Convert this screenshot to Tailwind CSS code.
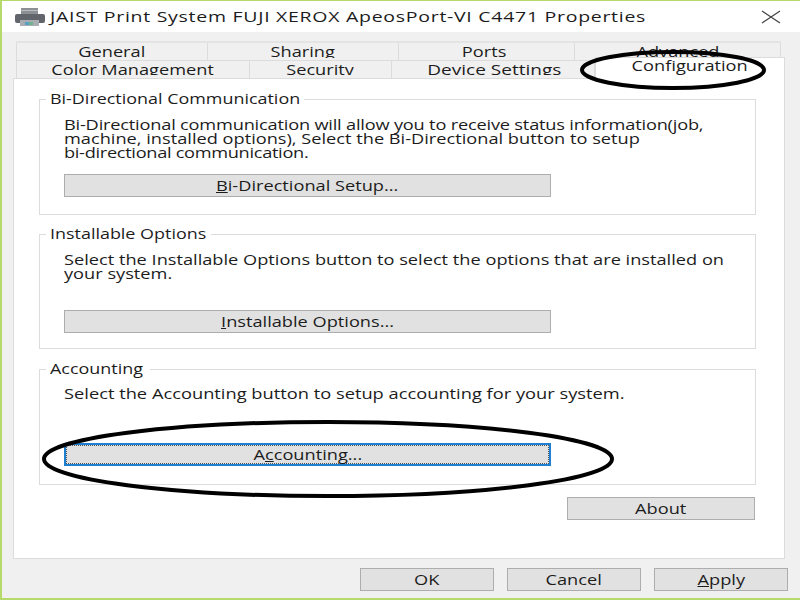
<!DOCTYPE html>
<html><head><meta charset="utf-8"><script src="https://cdn.jsdelivr.net/npm/@tailwindcss/browser@4"></script></head>
<body class="m-0 p-0">
<div class="relative w-[800px] h-[600px] overflow-hidden bg-[#f0f0f0] border-t border-l-2 border-b-2 border-[#b5d96a] font-['Open_Sans',sans-serif] text-[14px] text-[#1c1c1c] box-border flex flex-col">
  <div class="h-[31px] shrink-0 bg-white flex items-center pl-[12px] pr-[19px]">
    <svg width="32" height="20" viewBox="0 0 32 20" class="shrink-0"><rect x="7" y="1" width="17" height="7" fill="#8c8f94"/><rect x="7" y="3" width="17" height="1" fill="#b9bcc0"/><rect x="1" y="7" width="30" height="9" rx="2" fill="#62666c"/><rect x="6" y="13" width="19" height="6" fill="#a9adb2"/><rect x="11" y="15" width="4" height="3" fill="#5a9fc4"/><rect x="15" y="15" width="4" height="3" fill="#6fb28f"/></svg>
    <span class="ml-[4px] inline-block origin-left scale-x-[1.3] text-[15px] tracking-[0.55px] leading-none whitespace-nowrap">JAIST Print System FUJI XEROX ApeosPort-VI C4471 Properties</span>
    <svg width="20" height="14" viewBox="0 0 20 14" class="ml-auto shrink-0"><path d="M1 1L19 13M19 1L1 13" stroke="#444" stroke-width="1.2" fill="none"/></svg>
  </div>
  <div class="ml-[14px] mr-[19px] mt-[9px] h-[19px] flex bg-[#f0f0f0] border-t-2 border-[#e4e4e4] overflow-hidden shrink-0 leading-[18px] text-center">
    <div class="w-[192px] border-x border-[#dcdcdc]"><span class="inline-block h-[15px] overflow-hidden scale-x-[1.3]">General</span></div>
    <div class="w-[191px] border-r border-[#dcdcdc]"><span class="inline-block h-[15px] overflow-hidden scale-x-[1.3]">Sharing</span></div>
    <div class="w-[176px] border-r border-[#dcdcdc] pr-[4px]"><span class="inline-block h-[15px] overflow-hidden scale-x-[1.3]">Ports</span></div>
    <div class="flex-1 border-r border-[#dcdcdc]"><span class="inline-block h-[15px] overflow-hidden scale-x-[1.3]">Advanced</span></div>
  </div>
  <div class="relative ml-[14px] mr-[15px] h-[18px] flex shrink-0 text-center leading-[17px]">
    <div class="w-[234px] border-x border-t border-[#dcdcdc] overflow-hidden"><span class="inline-block h-[14px] overflow-hidden scale-x-[1.3]">Color Management</span></div>
    <div class="w-[142px] border-r border-t border-[#dcdcdc] overflow-hidden"><span class="inline-block h-[14px] overflow-hidden scale-x-[1.3]">Security</span></div>
    <div class="w-[203px] border-r border-t border-[#dcdcdc] overflow-hidden pl-[2px]"><span class="inline-block h-[14px] overflow-hidden scale-x-[1.36]">Device Settings</span></div>
    <div class="absolute left-[579px] right-0 top-[-3px] h-[22px] bg-white z-10 border-x border-t border-[#dcdcdc] leading-[16px]"><span class="inline-block scale-x-[1.3]">Configuration</span></div>
  </div>
  <div class="ml-[11px] mr-[15px] h-[481px] bg-white border border-[#dcdcdc] shrink-0 pt-[20px] pl-[25px] pr-[28px] flex flex-col">
    <div class="relative h-[116px] border border-[#dcdcdc] shrink-0 pt-[18px] pl-[24px]">
      <span class="absolute left-[6px] top-[-10px] bg-white px-[4px] w-[258px] h-[18px] leading-[18px]"><span class="inline-block origin-left scale-x-[1.28] whitespace-nowrap">Bi-Directional Communication</span></span>
      <p class="leading-[14px] origin-left scale-x-[1.3] whitespace-nowrap"><span class="tracking-[-0.15px]">Bi-Directional communication will allow you to receive status information(job,</span><br>machine, installed options), Select the Bi-Directional button to setup<br><span class="tracking-[-0.24px]">bi-directional communication.</span></p>
      <div class="mt-[14px] w-[487px] h-[23px] bg-[#e1e1e1] border border-[#adadad] text-center leading-[21px]"><span class="inline-block scale-x-[1.3]"><u>B</u>i-Directional Setup...</span></div>
    </div>
    <div class="relative h-[115px] mt-[19px] border border-[#dcdcdc] shrink-0 pt-[18px] pl-[24px]">
      <span class="absolute left-[6px] top-[-10px] bg-white px-[4px] w-[165px] h-[18px] leading-[18px]"><span class="inline-block origin-left scale-x-[1.28] whitespace-nowrap">Installable Options</span></span>
      <p class="leading-[14px] origin-left scale-x-[1.3] whitespace-nowrap">Select the Installable Options button to select the options that are installed on<br>your system.</p>
      <div class="mt-[29px] w-[487px] h-[23px] bg-[#e1e1e1] border border-[#adadad] text-center leading-[21px]"><span class="inline-block scale-x-[1.3]"><u>I</u>nstallable Options...</span></div>
    </div>
    <div class="relative h-[116px] mt-[20px] border border-[#dcdcdc] shrink-0 pt-[17px] pl-[24px]">
      <span class="absolute left-[6px] top-[-10px] bg-white px-[4px] w-[104px] h-[18px] leading-[18px]"><span class="inline-block origin-left scale-x-[1.28] whitespace-nowrap">Accounting</span></span>
      <p class="leading-[14px] origin-left scale-x-[1.305] whitespace-nowrap">Select the Accounting button to setup accounting for your system.</p>
      <div class="mt-[42px] w-[487px] h-[23px] bg-[#e1e1e1] border-2 border-[#1f7fd0] text-center leading-[19px] outline-1 outline-dotted outline-offset-[-3px] outline-[#555]"><span class="inline-block scale-x-[1.3]">A<u>c</u>counting...</span></div>
    </div>
    <div class="mt-[12px] ml-auto mr-[1px] w-[188px] h-[23px] bg-[#e1e1e1] border border-[#adadad] text-center leading-[21px]"><span class="inline-block scale-x-[1.3]">About</span></div>
  </div>
  <div class="flex justify-end gap-[13px] pr-[12px] pt-[9px]">
    <div class="w-[134px] h-[23px] bg-[#e1e1e1] border border-[#adadad] text-center leading-[21px]"><span class="inline-block scale-x-[1.3]">OK</span></div>
    <div class="w-[134px] h-[23px] bg-[#e1e1e1] border border-[#adadad] text-center leading-[21px]"><span class="inline-block scale-x-[1.3]">Cancel</span></div>
    <div class="w-[134px] h-[23px] bg-[#e1e1e1] border border-[#adadad] text-center leading-[21px]"><span class="inline-block scale-x-[1.3]"><u>A</u>pply</span></div>
  </div>
  <svg class="absolute left-[-2px] top-[-1px] z-20 pointer-events-none" width="800" height="600" viewBox="0 0 800 600" fill="none">
    <ellipse cx="673" cy="70" rx="91" ry="18" stroke="#000" stroke-width="4"/>
    <ellipse cx="328" cy="459" rx="284" ry="37" stroke="#000" stroke-width="4"/>
  </svg>
</div>
</body></html>
